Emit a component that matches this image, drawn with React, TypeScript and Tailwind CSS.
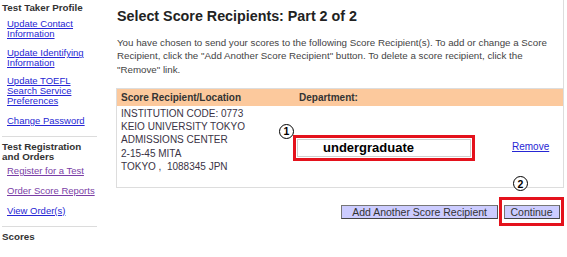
export default function App() {
  const link = "block text-[#2626d4] underline leading-[9.6px] text-[9.5px]"
  const visited = "block text-[#7a3ea6] underline leading-[9.6px] text-[9.5px]"
  const head = "font-bold text-[#333] text-[9.8px] leading-[10px]"
  const circle =
    "absolute flex h-[15px] w-[15px] items-center justify-center rounded-full border-[1.5px] border-black bg-white text-[10.5px] font-bold leading-none text-black"

  return (
    <div
      className="flex h-[257px] w-[567px] overflow-hidden bg-white"
      style={{ fontFamily: '"Liberation Sans", Arial, sans-serif' }}
    >
      {/* sidebar */}
      <aside className="w-[105px] shrink-0 pl-[2px] pt-[3px]">
        <h3 className={head}>Test Taker Profile</h3>
        <div className="pl-[5px]">
          <a className={`${link} mt-[6px]`}>Update Contact<br />Information</a>
          <a className={`${link} mt-[10px]`}>Update Identifying<br />Information</a>
          <a className={`${link} mt-[9px]`}>Update TOEFL<br />Search Service<br />Preferences</a>
          <a className={`${link} mt-[11px]`}>Change Password</a>
        </div>
        <div className="mt-[10px] h-px w-[95px] bg-[#dcdcdc]" />
        <h3 className={`${head} mt-[5px]`}>Test Registration<br />and Orders</h3>
        <div className="pl-[5px]">
          <a className={`${visited} mt-[4px]`}>Register for a Test</a>
          <a className={`${visited} mt-[11px]`}>Order Score Reports</a>
          <a className={`${link} mt-[10px]`}>View Order(s)</a>
        </div>
        <div className="mt-[10px] h-px w-[95px] bg-[#dcdcdc]" />
        <h3 className={`${head} mt-[5px]`}>Scores</h3>
      </aside>

      {/* main */}
      <main className="ml-[11px] w-[448px] shrink-0">
        <div className="border-r border-[#ddd] pl-[1px] pt-[8px] pb-[12px]">
          <h1 className="text-[14.3px] font-bold leading-[17px] text-[#222]">
            Select Score Recipients: Part 2 of 2
          </h1>
          <p className="mt-[11px] w-[440px] text-[9.75px] leading-[13.3px] text-[#444]">
            You have chosen to send your scores to the following Score Recipient(s). To add or change a Score
            Recipient, click the "Add Another Score Recipient" button. To delete a score recipient, click the
            "Remove" link.
          </p>
        </div>

        <div className="border border-[#ddd]">
          <div className="flex h-[17px] items-center bg-[#fcc99d] text-[10px] font-bold text-[#333]">
            <span className="w-[182px] pl-[4px]">Score Recipient/Location</span>
            <span>Department:</span>
          </div>
          <div className="flex items-start">
            <div className="w-[176px] shrink-0 pl-[4px] pt-[1px] pb-[14px] text-[10px] leading-[13.3px] text-[#3a3345]">
              <div>INSTITUTION CODE: 0773</div>
              <div>KEIO UNIVERSITY TOKYO</div>
              <div>ADMISSIONS CENTER</div>
              <div>2-15-45 MITA</div>
              <div>TOKYO ,&nbsp; 1088345 JPN</div>
            </div>
            <div className="relative mt-[29px] h-[26px] w-[182px] shrink-0 border-[3px] border-[#e4121c] p-[1px]">
              <span className={`${circle} -left-[17px] -top-[14px]`}>1</span>
              <div className="flex h-full items-center border border-[#cfcfcf] pl-[25px] text-[13px] font-bold text-black">
                undergraduate
              </div>
            </div>
            <a className="ml-[37px] mt-[35px] text-[10px] leading-[12px] text-[#2626d4] underline">Remove</a>
          </div>
        </div>

        <div className="mt-[9px] flex items-center justify-end">
          <button className="h-[14px] border border-[#777] border-b-[#444] border-r-[#555] bg-[#ccccff] px-[10px] text-[10.5px] leading-[12px] text-[#333]">
            Add Another Score Recipient
          </button>
          <div className="relative ml-[1px] flex h-[29px] w-[65px] items-center justify-center border-[3px] border-[#e4121c]">
            <span className={`${circle} left-[11px] -top-[24px]`}>2</span>
            <button className="h-[14px] w-[56px] border border-[#777] border-b-[#444] border-r-[#555] bg-[#ccccff] text-[10.5px] leading-[12px] text-[#333]">
              Continue
            </button>
          </div>
        </div>
      </main>
    </div>
  )
}
